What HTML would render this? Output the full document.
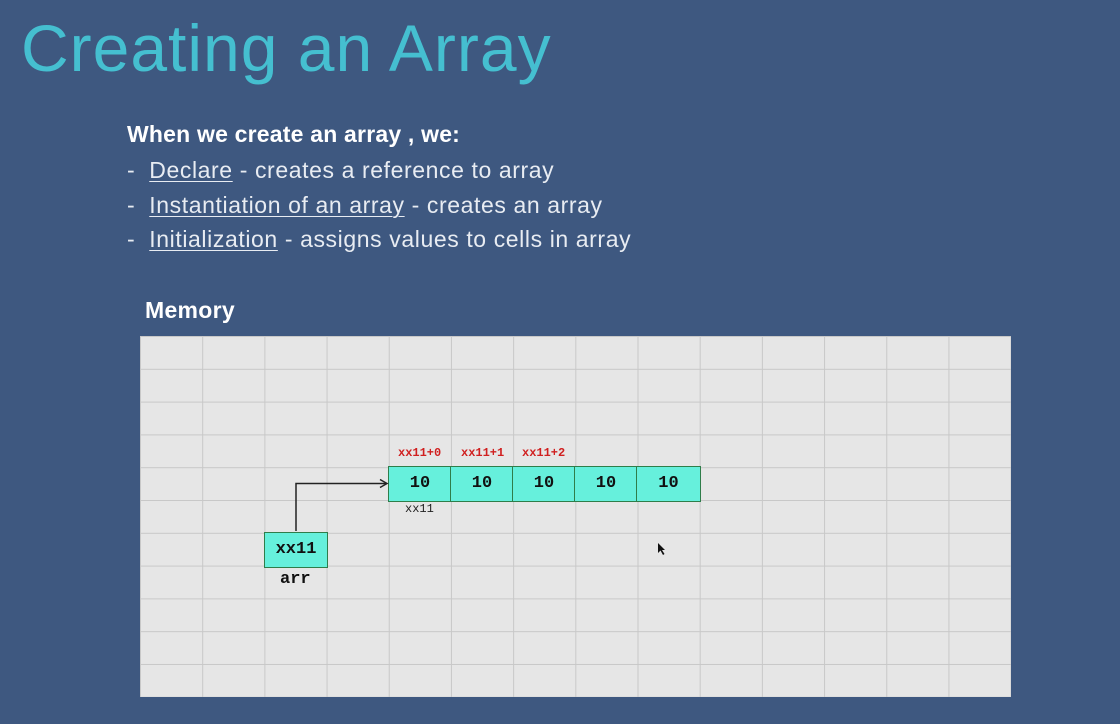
<!DOCTYPE html>
<html><head><style>
body{margin:0;width:1120px;height:724px;background:#3e5880;position:relative;overflow:hidden;font-family:"Liberation Sans",sans-serif;}
.t{position:absolute;left:21px;top:10px;font-size:66px;color:#45bfd0;font-weight:normal;letter-spacing:1px;white-space:nowrap;}
.l{position:absolute;left:127px;font-size:23px;letter-spacing:0.6px;color:#e8ecf2;white-space:nowrap;}
.l u{text-decoration-thickness:1px;text-underline-offset:3px;}
.grid{position:absolute;left:140px;top:336px;width:871px;height:361px;background-color:#e6e6e6;
background-image:linear-gradient(to right,#c8c8c8 1px,transparent 1px),linear-gradient(to bottom,#c8c8c8 1px,transparent 1px);
background-size:62.2px 32.8px;}
.c{position:absolute;background:#66f0dc;border:1.5px solid #2f7d4a;box-sizing:border-box;font-family:"Liberation Mono",monospace;font-weight:bold;font-size:17px;color:#111;text-align:center;}
.r{position:absolute;font-family:"Liberation Mono",monospace;font-weight:bold;font-size:12px;color:#d02020;}
</style></head><body>
<div class="t">Creating an Array</div>
<div class="l" style="top:121px;font-weight:bold;color:#fff;letter-spacing:0.2px">When we create an array , we:</div>
<div class="l" style="top:157px">- &nbsp;<u>Declare</u> - creates a reference to array</div>
<div class="l" style="top:192px">- &nbsp;<u>Instantiation of an array</u> - creates an array</div>
<div class="l" style="top:226px">- &nbsp;<u>Initialization</u> - assigns values to cells in array</div>
<div class="l" style="top:297px;left:145px;font-weight:bold;color:#fff;letter-spacing:0.3px">Memory</div>
<div class="grid"></div>
<div class="c" style="left:388px;top:466px;width:64px;height:36px;line-height:33px">10</div>
<div class="c" style="left:450px;top:466px;width:64px;height:36px;line-height:33px">10</div>
<div class="c" style="left:512px;top:466px;width:64px;height:36px;line-height:33px">10</div>
<div class="c" style="left:574px;top:466px;width:64px;height:36px;line-height:33px">10</div>
<div class="c" style="left:636px;top:466px;width:65px;height:36px;line-height:33px">10</div>
<div class="c" style="left:264px;top:532px;width:64px;height:36px;line-height:33px">xx11</div>
<div class="r" style="left:398px;top:446px">xx11+0</div>
<div class="r" style="left:461px;top:446px">xx11+1</div>
<div class="r" style="left:522px;top:446px">xx11+2</div>
<div style="position:absolute;left:405px;top:502px;font-family:'Liberation Mono',monospace;font-size:12px;color:#222">xx11</div>
<div style="position:absolute;left:280px;top:570px;font-family:'Liberation Mono',monospace;font-weight:bold;font-size:17px;color:#111">arr</div>
<svg style="position:absolute;left:0;top:0" width="1120" height="724">
<path d="M296 531 V483.5 H386" fill="none" stroke="#222" stroke-width="1.5"/>
<path d="M380 479.5 L387 483.5 L380 487.5" fill="none" stroke="#222" stroke-width="1.5"/>
<path d="M658 543 L658 553 L660.5 550.5 L663 555 L664.5 554 L662 550 L665 550 Z" fill="#111"/>
</svg>
</body></html>
